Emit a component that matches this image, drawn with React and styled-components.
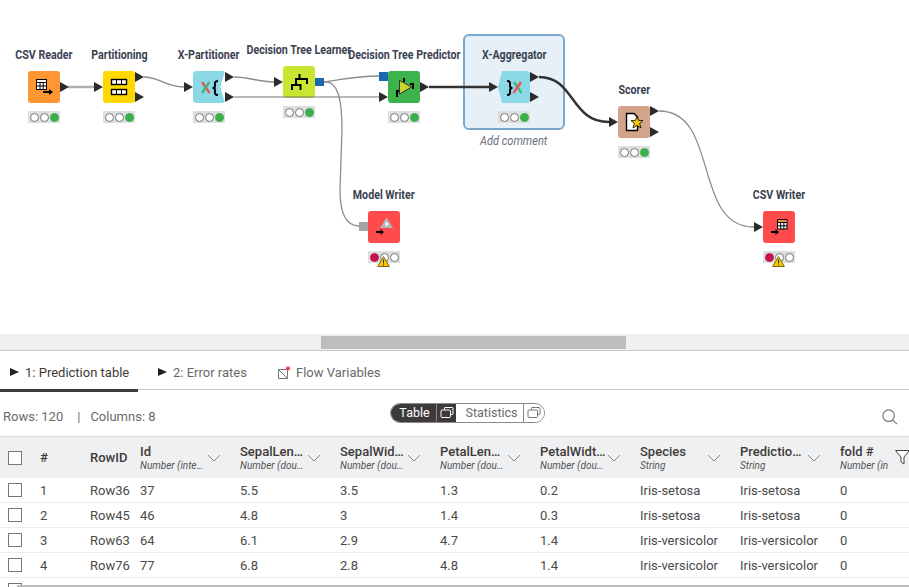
import React from 'react'
import styled, { createGlobalStyle } from 'styled-components'

const GlobalStyle = createGlobalStyle`
html, body {
  margin: 0;
  padding: 0;
  background: #fff;
  overflow: hidden;
}
body {
  font-family: Roboto, "Liberation Sans", sans-serif;
  color: #3e3a39;
}
`

const Page = styled.div`
width: 909px;
height: 587px;
overflow: hidden;
position: relative;
display: flex;
flex-direction: column;
`

/* workflow editor */

const Canvas = styled.div`
position: relative;
height: 334px;
flex: none;
background: #fff;
`

const Wires = styled.svg`
position: absolute;
left: 0;
top: 0;
z-index: 2;
`

const SelectionBox = styled.div`
position: absolute;
left: 463px;
top: 34px;
width: 102px;
height: 96px;
box-sizing: border-box;
background: #e8f0f7;
border: 2px solid #7ba7cc;
border-radius: 6px;
`

const Node = styled.div`
position: absolute;
left: ${(p) => p.$x - 44}px;
top: ${(p) => p.$y - 24}px;
width: 120px;
display: flex;
flex-direction: column;
align-items: center;
z-index: 1;
`

/* no condensed font is installed, so the label is narrowed by hand */
const NodeLabel = styled.div`
height: 16px;
line-height: 16px;
margin-bottom: 8px;
white-space: nowrap;
font-family: Roboto, "Liberation Sans", sans-serif;
font-weight: 700;
font-size: 13px;
color: #3b4252;
transform: scaleX(0.82);
`

const Tile = styled.div`
width: 32px;
height: 32px;
position: relative;
background: ${(p) => p.$color};
border-radius: 3px;
clip-path: ${(p) => (p.$shape ? `path('${p.$shape}')` : 'none')};
svg {
  display: block;
}
`

const Status = styled.div`
position: relative;
width: 32px;
height: 12px;
margin-top: 8px;
box-sizing: border-box;
background: #dcdfdd;
display: flex;
align-items: center;
justify-content: center;
gap: 1px;
`

const Light = styled.span`
width: 9px;
height: 9px;
border-radius: 50%;
box-sizing: border-box;
border: 1px solid ${(p) => (p.$color ? p.$color : '#777')};
background: ${(p) => p.$color || '#fff'};
`

const Warning = styled.svg`
position: absolute;
left: 9px;
top: 5px;
`

const Comment = styled.div`
margin-top: 11px;
font-family: Roboto, "Liberation Sans", sans-serif;
font-style: italic;
font-size: 13px;
line-height: 14px;
color: #6b6f80;
transform: scaleX(0.85);
`

/* scrollbars */

const HScroll = styled.div`
height: 17px;
flex: none;
background: #f0f0f0;
border-bottom: 1px solid #c9c9c9;
box-sizing: border-box;
padding: 2px 0 0 321px;
`

const HThumb = styled.div`
width: 305px;
height: 13px;
background: #bdbdbd;
`

const BottomScroll = styled.div`
position: absolute;
left: 17px;
right: 0;
bottom: 0;
height: 2px;
background: #bdbdbd;
`

/* tabs */

const Tabs = styled.div`
height: 39px;
flex: none;
display: flex;
gap: 10px;
box-sizing: border-box;
border-bottom: 1px solid #c8c8c8;
font-size: 13px;
`

const Tab = styled.div`
width: ${(p) => p.$width}px;
box-sizing: border-box;
padding: 2px 0 0 10px;
display: flex;
align-items: center;
gap: 6px;
height: 41px;
color: ${(p) => (p.$active ? '#3e3a39' : '#6a6a6a')};
box-shadow: ${(p) => (p.$active ? 'inset 0 -3px 0 #3e3a39' : 'none')};
`

const TabArrow = styled.span`
width: 0;
height: 0;
margin-top: -2px;
border-left: 9px solid #222;
border-top: 4.5px solid transparent;
border-bottom: 4.5px solid transparent;
`

/* toolbar above the table */

const Toolbar = styled.div`
height: 46px;
flex: none;
position: relative;
display: flex;
align-items: center;
box-sizing: border-box;
padding: 5px 11px 0 3px;
font-size: 13px;
color: #6a6a6a;
`

const Counts = styled.div`
width: 387px;
display: flex;
gap: 12px;
margin-top: 1px;
`

const CountDivider = styled.span`
margin: 0 -2px 0 2px;
`

const Segments = styled.div`
width: 155px;
height: 20px;
box-sizing: border-box;
margin-top: -6px;
display: flex;
align-items: center;
border: 1px solid #8a8a8a;
border-radius: 10px;
overflow: hidden;
`

const Segment = styled.div`
height: 100%;
display: flex;
align-items: center;
justify-content: center;
width: ${(p) => p.$width}px;
padding-left: ${(p) => p.$inset || 0}px;
font-size: 12.5px;
flex: none;
background: ${(p) => (p.$on ? '#3e3a39' : '#fff')};
color: ${(p) => (p.$on ? '#fff' : '#6a6a6a')};
border-right: ${(p) => (p.$edge ? '1px solid #8a8a8a' : '0')};
box-sizing: border-box;
`

const SearchButton = styled.div`
margin-left: auto;
margin-top: 2px;
display: flex;
`

/* table */

const TableWrap = styled.div`
flex: 1;
overflow: hidden;
font-size: 13px;
`

const HeadRow = styled.div`
height: 42px;
display: grid;
grid-template-columns: 40px 50px 50px repeat(8, 100px);
align-items: center;
background: #eff0f2;
border-top: 1px solid #d8dadd;
box-sizing: border-box;
position: relative;
`

const Row = styled.div`
height: 25px;
display: grid;
grid-template-columns: 40px 50px 50px repeat(8, 100px);
align-items: center;
border-bottom: 1px solid #ececec;
box-sizing: border-box;
color: #4a4a4a;
`

const Cell = styled.div`
white-space: nowrap;
overflow: hidden;
`

const CheckCell = styled.div`
padding-left: 8px;
display: flex;
`

const Check = styled.span`
width: 14px;
height: 14px;
box-sizing: border-box;
background: #fff;
border: 1px solid #777;
`

const HeadCell = styled.div`
position: relative;
height: 100%;
display: flex;
flex-direction: column;
justify-content: center;
overflow: hidden;
`

const HeadName = styled.div`
font-weight: 500;
font-size: 13px;
line-height: 15px;
color: #3e3a39;
white-space: nowrap;
`

const HeadType = styled.div`
font-style: italic;
font-size: 10px;
line-height: 13px;
color: #555;
white-space: nowrap;
`

const Chevron = styled.svg`
position: absolute;
left: 67px;
top: 17px;
`

const Funnel = styled.svg`
position: absolute;
left: 895px;
top: 13px;
`

const Triangle = ({ x, y }) => (
  <polygon points={`${x},${y - 5} ${x + 9},${y} ${x},${y + 5}`} fill="#2b2b2b" />
)

const ICONS = {
  reader: (
    <>
      <rect x="8.5" y="8.5" width="10" height="10" fill="#fff" stroke="#000" />
      <path d="M8.5 11.5H18.5M8.5 15H18.5M12 11.5V18.5M15.2 11.5V18.5" stroke="#000" />
      <path d="M15 21H22" stroke="#000" strokeWidth="2" />
      <polygon points="21,18 25,21 21,24" fill="#000" />
    </>
  ),
  partition: (
    <>
      <rect x="8.5" y="8.5" width="15" height="5" fill="#fff" stroke="#000" strokeWidth="1.4" />
      <rect x="8.5" y="18.5" width="15" height="5" fill="#fff" stroke="#000" strokeWidth="1.4" />
      <path d="M13.5 8.5V13.5M18.5 8.5V13.5M13.5 18.5V23.5M18.5 18.5V23.5" stroke="#000" />
    </>
  ),
  xStart: (
    <>
      <path d="M9 11L16.5 22" stroke="#e8565a" strokeWidth="2.4" />
      <path d="M16.5 11L9 22" stroke="#4caf7d" strokeWidth="2.4" />
      <path d="M25 10C21 10 22 13 22 15C22 16.5 21 17 19.5 17C21 17 22 17.5 22 19C22 21 21 24 25 24" fill="none" stroke="#000" strokeWidth="2" />
    </>
  ),
  learner: (
    <path d="M16.5 8V13M13 19V13H24V18M9 24V19H17.5V24" fill="none" stroke="#000" strokeWidth="2" />
  ),
  predictor: (
    <>
      <path d="M9 26V20H12M16 7V11M22 13H25V18" fill="none" stroke="#000" strokeWidth="2" />
      <polygon points="11.5,9.5 23.5,16 11.5,23" fill="#c8d62e" stroke="#333" strokeWidth="1" />
    </>
  ),
  xEnd: (
    <>
      <path d="M9 10C13 10 12 13 12 15C12 16.5 13 17 14.5 17C13 17 12 17.5 12 19C12 21 13 24 9 24" fill="none" stroke="#000" strokeWidth="2" />
      <path d="M16 11L23.5 22" stroke="#4caf7d" strokeWidth="2.4" />
      <path d="M23 11L15.5 22" stroke="#e8565a" strokeWidth="2.4" />
    </>
  ),
  scorer: (
    <>
      <path d="M8.5 7.5H16L19.5 11V24.5H8.5Z" fill="#fff" stroke="#000" strokeWidth="1.4" />
      <polygon points="19,10 20.6,14.4 25,14.6 21.6,17.4 23,22 19,19.4 15,22 16.4,17.4 13,14.6 17.4,14.4" fill="#f5c800" stroke="#000" strokeWidth="0.8" />
    </>
  ),
  modelWriter: (
    <>
      <polygon points="12,17 18.5,6.5 25,17" fill="#b4b4b4" />
      <polygon points="17.5,10.5 21,13 17.5,15.5" fill="#fff" />
      <path d="M8 21H13" stroke="#000" strokeWidth="2" />
      <polygon points="12.5,18 16,21 12.5,24" fill="#000" />
    </>
  ),
  csvWriter: (
    <>
      <rect x="14.5" y="8.5" width="9.5" height="9.5" fill="#fff" stroke="#000" />
      <rect x="15" y="9" width="8.5" height="2.4" fill="#f08a3c" />
      <path d="M14.5 11.5H24M14.5 14.8H24M17.7 11.5V18M20.9 11.5V18" stroke="#000" />
      <path d="M8 21H13" stroke="#000" strokeWidth="2" />
      <polygon points="12.5,18 16,21 12.5,24" fill="#000" />
    </>
  ),
}

const X_START_SHAPE = 'M3 0H31Q32.5 0 31.5 2L28 13Q27 16 28 19L31.5 30Q32.5 32 31 32H3Q0 32 0 29V3Q0 0 3 0Z'
const X_END_SHAPE = 'M4 0H29Q32 0 32 3V29Q32 32 29 32H4L0 16Z'

const NODES = [
  { name: 'CSV Reader', x: 28, y: 71, color: '#ff9632', icon: 'reader' },
  { name: 'Partitioning', x: 103, y: 71, color: '#ffd800', icon: 'partition' },
  { name: 'X-Partitioner', x: 193, y: 71, color: '#8bd9e6', icon: 'xStart', shape: X_START_SHAPE },
  { name: 'Decision Tree Learner', x: 283, y: 66, color: '#c8e632', icon: 'learner' },
  { name: 'Decision Tree Predictor', x: 388, y: 71, color: '#3cb44b', icon: 'predictor' },
  { name: 'X-Aggregator', x: 498, y: 71, color: '#8bd9e6', icon: 'xEnd', shape: X_END_SHAPE, comment: 'Add comment' },
  { name: 'Scorer', x: 618, y: 106, color: '#d2a58a', icon: 'scorer' },
  { name: 'Model Writer', x: 368, y: 211, color: '#ff4b4b', icon: 'modelWriter', failed: true },
  { name: 'CSV Writer', x: 763, y: 211, color: '#ff4b4b', icon: 'csvWriter', failed: true },
]

const THIN_WIRES = [
  'M144 77C160 77 165 87 184 87',
  'M234 77C250 77 258 82 274 82',
  'M324 82C340 80 355 76 379 76',
  'M324 82C338 80 342 100 342 130L340 190C340 215 347 226 359 226',
  'M659 111C720 111 692 227 754 227',
]

const ARROWS = [
  [60, 87], [94, 87], [135, 77], [135, 97], [184, 87], [225, 77], [225, 97], [274, 82],
  [379, 97], [420, 87], [489, 87], [530, 77], [530, 97], [609, 122], [650, 111], [650, 132], [754, 227],
]

const COLUMNS = [
  { name: 'Id', type: 'Number (inte…' },
  { name: 'SepalLen…', type: 'Number (dou…' },
  { name: 'SepalWid…', type: 'Number (dou…' },
  { name: 'PetalLen…', type: 'Number (dou…' },
  { name: 'PetalWidt…', type: 'Number (dou…' },
  { name: 'Species', type: 'String' },
  { name: 'Predictio…', type: 'String' },
  { name: 'fold #', type: 'Number (in', noSort: true },
]

const ROWS = [
  [1, 'Row36', 37, 5.5, 3.5, 1.3, 0.2, 'Iris-setosa', 'Iris-setosa', 0],
  [2, 'Row45', 46, 4.8, 3, 1.4, 0.3, 'Iris-setosa', 'Iris-setosa', 0],
  [3, 'Row63', 64, 6.1, 2.9, 4.7, 1.4, 'Iris-versicolor', 'Iris-versicolor', 0],
  [4, 'Row76', 77, 6.8, 2.8, 4.8, 1.4, 'Iris-versicolor', 'Iris-versicolor', 0],
  ['', '', '', '', '', '', '', '', '', ''],
]

const CopyIcon = ({ color }) => (
  <svg width="14" height="12" viewBox="0 0 14 12" fill="none" stroke={color}>
    <path d="M4.5 2.5V1C4.5 .7 4.7 .5 5 .5H12.5C12.8 .5 13 .7 13 1V7C13 7.3 12.8 7.5 12.5 7.5H10.5" />
    <rect x="1" y="3" width="9.5" height="7.5" rx="1" />
  </svg>
)

const WorkflowNode = ({ node }) => (
  <Node $x={node.x} $y={node.y}>
    <NodeLabel>{node.name}</NodeLabel>
    <Tile $color={node.color} $shape={node.shape}>
      <svg width="32" height="32" viewBox="0 0 32 32">{ICONS[node.icon]}</svg>
    </Tile>
    <Status>
      <Light $color={node.failed ? '#c2144f' : null} />
      <Light />
      <Light $color={node.failed ? null : '#3aaf4c'} />
      {node.failed && (
        <Warning width="13" height="11" viewBox="0 0 13 11">
          <polygon points="6.5,.6 12.4,10.5 .6,10.5" fill="#f5c800" stroke="#7a6a10" />
          <path d="M6.5 3.5V7.5M6.5 8.5V9.7" stroke="#333" />
        </Warning>
      )}
    </Status>
    {node.comment && <Comment>{node.comment}</Comment>}
  </Node>
)

const App = () => {
  return (
    <Page>
      <GlobalStyle />
      <Canvas>
        <SelectionBox />
        {NODES.map((node) => (
          <WorkflowNode key={node.name} node={node} />
        ))}
        <Wires width="909" height="334" viewBox="0 0 909 334" fill="none">
          <path d="M68 87H94" stroke="#b0b0b0" strokeWidth="2.5" />
          {THIN_WIRES.map((d) => (
            <path key={d} d={d} stroke="#8c8c8c" strokeWidth="1.3" />
          ))}
          <path d="M234 97H379" stroke="#777" strokeWidth="1.2" />
          <path d="M429 87H489" stroke="#333" strokeWidth="2.5" />
          <path d="M539 77C575 77 570 122 609 122" stroke="#333" strokeWidth="2.5" />
          {ARROWS.map(([x, y]) => (
            <Triangle key={`${x}-${y}`} x={x} y={y} />
          ))}
          <rect x="315" y="78" width="9" height="8" fill="#1a68b0" />
          <rect x="379" y="72" width="9" height="9" fill="#1a68b0" />
          <rect x="359" y="222" width="9" height="9" fill="#a4a4a4" />
        </Wires>
      </Canvas>
      <HScroll>
        <HThumb />
      </HScroll>
      <Tabs>
        <Tab $active $width={138}>
          <TabArrow />
          1: Prediction table
        </Tab>
        <Tab $width={110}>
          <TabArrow />
          2: Error rates
        </Tab>
        <Tab $width={130}>
          <svg width="12" height="14" viewBox="0 0 12 14" fill="none">
            <path d="M.5 3.5H9.5V12.5H.5ZM.5 3.5L9.5 12.5" stroke="#777" />
            <circle cx="10" cy="2.5" r="2" fill="#f0353f" />
          </svg>
          Flow Variables
        </Tab>
      </Tabs>
      <Toolbar>
        <Counts>
          <span>Rows: 120</span>
          <CountDivider>|</CountDivider>
          <span>Columns: 8</span>
        </Counts>
        <Segments>
          <Segment $on $edge $width={46} $inset={2}>Table</Segment>
          <Segment $on $width={19}>
            <CopyIcon color="#fff" />
          </Segment>
          <Segment $edge $width={68} $inset={4}>Statistics</Segment>
          <Segment $width={20}>
            <CopyIcon color="#777" />
          </Segment>
        </Segments>
        <SearchButton>
          <svg width="16" height="16" viewBox="0 0 18 18" fill="none" stroke="#777" strokeWidth="1.3">
            <circle cx="7.5" cy="7.5" r="6.5" />
            <path d="M12 12.5L17 17" />
          </svg>
        </SearchButton>
      </Toolbar>
      <TableWrap>
        <HeadRow>
          <CheckCell>
            <Check />
          </CheckCell>
          <HeadName>#</HeadName>
          <HeadName>RowID</HeadName>
          {COLUMNS.map((col) => (
            <HeadCell key={col.name}>
              <HeadName>{col.name}</HeadName>
              <HeadType>{col.type}</HeadType>
              {!col.noSort && (
                <Chevron width="14" height="8" viewBox="0 0 14 8" fill="none" stroke="#888">
                  <path d="M1 1L7 7L13 1" />
                </Chevron>
              )}
            </HeadCell>
          ))}
          <Funnel width="15" height="15" viewBox="0 0 15 15" fill="#fff" stroke="#444">
            <path d="M.5 .5H14.5L9 7V14L6 12V7Z" />
          </Funnel>
        </HeadRow>
        {ROWS.map((row, i) => (
          <Row key={i}>
            <CheckCell>
              <Check />
            </CheckCell>
            {row.map((value, j) => (
              <Cell key={j}>{value}</Cell>
            ))}
          </Row>
        ))}
      </TableWrap>
      <BottomScroll />
    </Page>
  )
}

export default App
